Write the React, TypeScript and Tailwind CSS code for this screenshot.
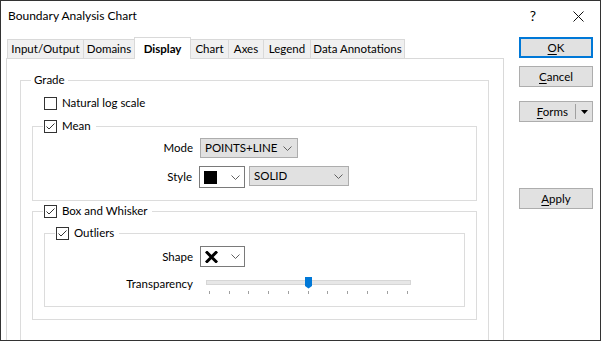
import React from 'react';

function Check({ checked }: { checked?: boolean }) {
  return (
    <span className="w-[13px] h-[13px] border border-[#333333] bg-white flex items-center justify-center shrink-0">
      {checked && (
        <svg width="11" height="11" viewBox="0 0 11 11">
          <path d="M1.5 5.5 L4 8 L9.5 2.5" fill="none" stroke="#333333" strokeWidth="1" />
        </svg>
      )}
    </span>
  );
}

function Chevron() {
  return (
    <svg width="9" height="5" viewBox="0 0 9 5" className="shrink-0">
      <path d="M0.5 0.5 L4.5 4.5 L8.5 0.5" fill="none" stroke="#606060" strokeWidth="1" />
    </svg>
  );
}

function Tab({ label, w, active }: { label: string; w: string; active?: boolean }) {
  if (active) {
    return (
      <div className={`${w} h-[22px] -mb-px -ml-px relative z-10 bg-white border border-b-0 border-[#d9d9d9] flex items-center justify-center font-bold`}>
        {label}
      </div>
    );
  }
  return (
    <div className={`${w} h-[19px] -ml-px bg-[#f0f0f0] border border-b-0 border-[#d9d9d9] flex items-center justify-center`}>
      {label}
    </div>
  );
}

function Button({ children, primary, className = '' }: { children: React.ReactNode; primary?: boolean; className?: string }) {
  return (
    <div
      className={`h-[21px] w-[74px] bg-[#e1e1e1] flex items-center justify-center ${
        primary ? 'border-2 border-[#0078d7]' : 'border border-[#adadad]'
      } ${className}`}
    >
      {children}
    </div>
  );
}

function Slider() {
  const ticks = [9, 29, 48, 68, 88, 108, 127, 147, 167, 187, 207];
  return (
    <svg width="216" height="22" viewBox="0 0 216 22" className="shrink-0">
      <rect x="6.5" y="5.5" width="204" height="4" fill="#e7e7e7" stroke="#d6d6d6" />
      {ticks.map((t) => (
        <line key={t} x1={t + 0.5} y1="16" x2={t + 0.5} y2="19" stroke="#a0a0a0" />
      ))}
      <path d="M105 2 H112 V11 L108.5 13.5 L105 11 Z" fill="#0078d7" />
    </svg>
  );
}

export default function App() {
  return (
    <div className="w-[601px] h-[341px] bg-white border border-[#333333] overflow-hidden flex flex-col text-[11.5px] leading-[16px] text-black font-['Lato',sans-serif]">
      {/* Title bar */}
      <div className="h-[36px] shrink-0 flex items-start pt-[7px] pl-[7px]">
        <span className="text-[12px]">Boundary Analysis Chart</span>
        <span className="ml-auto text-[14px]">?</span>
        <svg width="11" height="11" viewBox="0 0 11 11" className="ml-[37px] mr-[16px] mt-[3px]">
          <path d="M0.5 0.5 L10.5 10.5 M10.5 0.5 L0.5 10.5" stroke="#111" strokeWidth="1" />
        </svg>
      </div>

      <div className="flex flex-1 min-h-0">
        {/* Tabs + panel */}
        <div className="w-[498px] ml-[5px] flex flex-col">
          <div className="h-[21px] flex items-end ml-[2px] shrink-0">
            <Tab label="Input/Output" w="w-[77px]" />
            <Tab label="Domains" w="w-[52px]" />
            <Tab label="Display" w="w-[57px]" active />
            <Tab label="Chart" w="w-[39px]" />
            <Tab label="Axes" w="w-[36px]" />
            <Tab label="Legend" w="w-[48px]" />
            <Tab label="Data Annotations" w="w-[95px]" />
          </div>

          <div className="flex-1 border border-b-0 border-[#d9d9d9] pt-[13px] pl-[13px] pr-[14px]">
            <fieldset className="border border-b-0 border-[#dcdcdc] p-0 m-0 min-h-[300px]">
              <legend className="ml-[10px] px-[3px]">Grade</legend>
              <div className="px-[11px] pt-[7px]">
                <div className="h-[16px] flex items-center gap-[5px] ml-[12px]">
                  <Check />
                  <span>Natural log scale</span>
                </div>

                {/* Mean */}
                <fieldset className="border border-[#dcdcdc] p-0 m-0 mt-[7px]">
                  <legend className="ml-[10px] pl-[1px] pr-[5px] h-[16px] flex items-center gap-[5px]">
                    <Check checked />
                    <span>Mean</span>
                  </legend>
                  <div className="pt-[4px] pb-[12px]">
                    <div className="flex items-center h-[20px]">
                      <span className="w-[167px] pr-[7px] text-right">Mode</span>
                      <div className="w-[98px] h-[20px] bg-[#e1e1e1] border border-[#adadad] flex items-center pl-[4px] pr-[5px]">
                        <span className="flex-1">POINTS+LINE</span>
                        <Chevron />
                      </div>
                    </div>
                    <div className="flex items-center h-[22px] mt-[8px]">
                      <span className="w-[166px] pr-[7px] text-right">Style</span>
                      <div className="w-[46px] h-[22px] bg-white border border-[#7a7a7a] flex items-center pl-[4px] pr-[4px]">
                        <span className="w-[13px] h-[13px] bg-black" />
                        <span className="flex-1" />
                        <Chevron />
                      </div>
                      <div className="w-[100px] h-[20px] ml-[4px] self-start bg-[#e1e1e1] border border-[#adadad] flex items-center pl-[4px] pr-[5px]">
                        <span className="flex-1">SOLID</span>
                        <Chevron />
                      </div>
                    </div>
                  </div>
                </fieldset>

                {/* Box and Whisker */}
                <fieldset className="border border-[#dcdcdc] p-0 m-0 mt-[2px]">
                  <legend className="ml-[10px] pl-[1px] pr-[5px] h-[16px] flex items-center gap-[5px]">
                    <Check checked />
                    <span>Box and Whisker</span>
                  </legend>
                  <div className="px-[11px] pt-[6px] pb-[12px]">
                    <fieldset className="border border-[#dcdcdc] p-0 m-0">
                      <legend className="ml-[10px] pl-[1px] pr-[5px] h-[16px] flex items-center gap-[5px]">
                        <Check checked />
                        <span>Outliers</span>
                      </legend>
                      <div className="pt-[5px] pb-[9px]">
                        <div className="flex items-center h-[21px]">
                          <span className="w-[155px] pr-[7px] text-right">Shape</span>
                          <div className="w-[45px] h-[21px] bg-white border border-[#7a7a7a] flex items-center pl-[4px] pr-[4px]">
                            <svg width="13" height="12" viewBox="0 0 13 12">
                              <path d="M2 1.5 L11 10.5 M11 1.5 L2 10.5" stroke="#000" strokeWidth="3" strokeLinecap="square" />
                            </svg>
                            <span className="flex-1" />
                            <Chevron />
                          </div>
                        </div>
                        <div className="flex items-start h-[22px] mt-[8px]">
                          <span className="w-[155px] pr-[7px] text-right pt-[1px]">Transparency</span>
                          <Slider />
                        </div>
                      </div>
                    </fieldset>
                  </div>
                </fieldset>
              </div>
            </fieldset>
          </div>
        </div>

        {/* Buttons */}
        <div className="ml-[15px] w-[74px] flex flex-col">
          <Button primary>
            <span><u className="underline-offset-2">O</u>K</span>
          </Button>
          <Button className="mt-[8px]">
            <span><u className="underline-offset-2">C</u>ancel</span>
          </Button>
          <Button className="mt-[14px] !justify-end pr-[4px]">
            <span><u className="underline-offset-2">F</u>orms</span>
            <span className="w-px h-[15px] bg-[#a0a0a0] ml-[7px]" />
            <svg width="7" height="4" viewBox="0 0 7 4" className="ml-[5px]">
              <path d="M0 0 H7 L3.5 4 Z" fill="#000" />
            </svg>
          </Button>
          <Button className="mt-[66px]">
            <span><u className="underline-offset-2">A</u>pply</span>
          </Button>
        </div>
      </div>
    </div>
  );
}
